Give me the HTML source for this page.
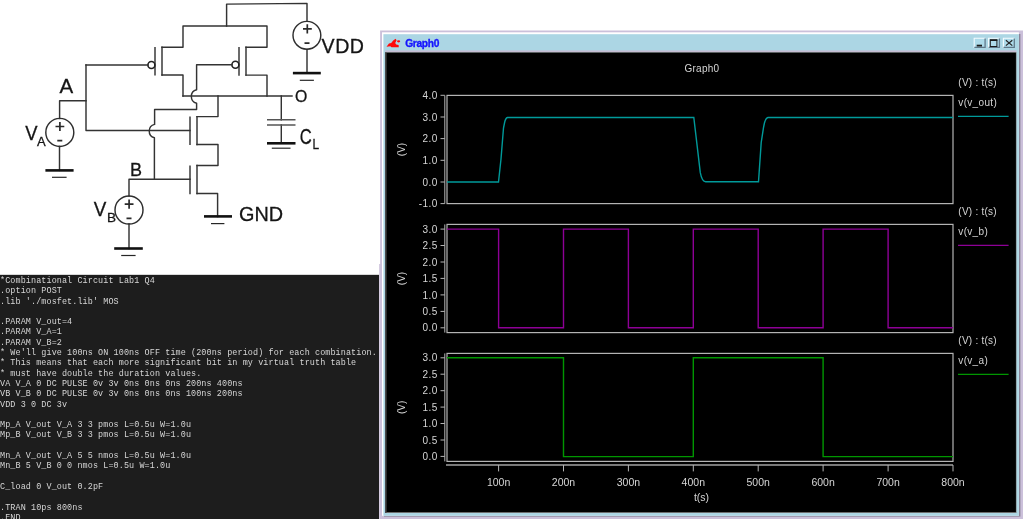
<!DOCTYPE html>
<html><head><meta charset="utf-8">
<style>
html,body{margin:0;padding:0;background:#fff;width:1023px;height:519px;overflow:hidden;position:relative}
svg{position:absolute;left:0;top:0}
#term{position:absolute;left:0;top:275px;width:379px;height:244px;background:#1d1d1d;overflow:hidden;box-shadow:0 -1px 0 #d8d8d8;}
#term pre{margin:0;padding:0;position:absolute;left:0px;top:1px;font-family:"Liberation Mono",monospace;font-size:8.45px;letter-spacing:0.1px;line-height:10.3px;color:#d6d6d6;white-space:pre}
</style></head><body>
<svg id="circ" width="380" height="275" viewBox="0 0 380 275" style="will-change:transform">
<g fill="none" stroke="#333" stroke-width="1.45" stroke-linecap="square" stroke-linejoin="round">
<!-- VDD top -->
<path d="M226.6,26 V4.1 L307,3.4 V21"/>
<!-- PMOS rails -->
<path d="M162,47.2 H183 V26 H267 V47.3 H246"/>
<path d="M162,47.2 V75"/>
<path d="M155,47.6 V74.8"/>
<circle cx="151.4" cy="65" r="3.5" stroke="#222" stroke-width="1.6"/>
<path d="M162,75 H183 V96"/>
<path d="M246,47.3 V75.1"/>
<path d="M239,47.6 V75"/>
<circle cx="235.4" cy="64.7" r="3.5" stroke="#222" stroke-width="1.6"/>
<path d="M246,75.1 H267 V96"/>
<!-- output -->
<path d="M183,96 H292"/>
<!-- B gate wire with hops -->
<path d="M231.9,64.7 H196.6 V89.8 A6.9,6.9 0 0 0 196.6,103.2 V109.4 H154.6 V124.4 A6.9,6.9 0 0 0 154.4,137.8 V179.2"/>
<!-- A -->
<path d="M59.6,118.4 V100.7 H86"/>
<path d="M86,65 H147.9"/>
<path d="M86,65 V130.5 H190"/>
<!-- NMOS -->
<path d="M190,117.2 V144.2"/>
<path d="M197,116.6 V144.4"/>
<path d="M197,116.6 H218 V96"/>
<path d="M197,144.4 H218 V165.4 H197"/>
<path d="M197,165.4 V193.4"/>
<path d="M190,166.2 V193.4"/>
<path d="M197,193.4 H217.6 V216.4"/>
<!-- B -->
<path d="M129,196 V179.2 H190"/>
<!-- source bottoms -->
<path d="M129,224 V248.5"/>
<path d="M59.5,146.4 V170.4"/>
<path d="M307,49.4 V73"/>
<!-- cap -->
<path d="M281.3,96 V119.8"/>
<path d="M281.3,125 V143.2"/>
</g>
<g fill="none" stroke="#2e2e2e" stroke-width="1.45">
<circle cx="306.9" cy="35.3" r="13.9"/>
<circle cx="59.8" cy="132.4" r="14"/>
<circle cx="129" cy="210" r="14"/>
</g>
<!-- plus minus -->
<g stroke="#2a2a2a" stroke-width="1.7" fill="none">
<path d="M303,28.8 H311.8 M307.3,24.3 V33.5 M304.5,43.2 H309.5"/>
<path d="M55.5,126.5 H64.3 M59.9,121.9 V131.1 M57.3,140.7 H62.3"/>
<path d="M124.7,204.1 H133.5 M129.1,199.5 V208.7 M126.5,218.3 H131.5"/>
</g>
<!-- grounds -->
<g stroke="#111" stroke-width="2.6">
<path d="M292.9,73.1 H320.8"/>
<path d="M45.4,170.4 H73.6"/>
<path d="M114.2,248.5 H142.8"/>
<path d="M204,216.4 H232"/>
<path d="M267,143.3 H295.5"/>
</g>
<g stroke="#262626" stroke-width="1.2">
<path d="M299.8,80.3 H313.9"/>
<path d="M52,177.3 H66.6"/>
<path d="M121.2,255.5 H135.6"/>
<path d="M211,223.6 H224.4"/>
<path d="M271.8,148.2 H290.5"/>
<path d="M267,119.8 H295.5 M267,125 H295.5" stroke="#555" stroke-width="1.6"/>
</g>
<g font-family="Liberation Sans" fill="#151515" stroke="#151515" stroke-width="0.3">
<text x="59.5" y="93" font-size="20.5">A</text>
<text x="25.2" y="140" font-size="20.5" transform="translate(25.2,0) scale(0.9,1) translate(-25.2,0)">V</text>
<text x="37" y="146" font-size="13">A</text>
<text x="130" y="176" font-size="18">B</text>
<text x="93.8" y="216.5" font-size="20.5" transform="translate(93.8,0) scale(0.92,1) translate(-93.8,0)">V</text>
<text x="107" y="222.3" font-size="13.6">B</text>
<text x="321.6" y="53.2" font-size="19.6" letter-spacing="0.5">VDD</text>
<text x="295" y="101.8" font-size="15.8">O</text>
<text x="299.8" y="143.9" font-size="21.6" transform="translate(300,0) scale(0.77,1) translate(-300,0)">C</text>
<text x="312.4" y="149.5" font-size="14" transform="translate(312.4,0) scale(0.85,1) translate(-312.4,0)">L</text>
<text x="239" y="220.6" font-size="20.8" transform="translate(239,0) scale(0.955,1) translate(-239,0)">GND</text>
</g>
</svg>
<div id="term"><pre>*Combinational Circuit Lab1 Q4
.option POST
.lib './mosfet.lib' MOS

.PARAM V_out=4
.PARAM V_A=1
.PARAM V_B=2
* We'll give 100ns ON 100ns OFF time (200ns period) for each combination.
* This means that each more significant bit in my virtual truth table
* must have double the duration values.
VA V_A 0 DC PULSE 0v 3v 0ns 0ns 0ns 200ns 400ns
VB V_B 0 DC PULSE 0v 3v 0ns 0ns 0ns 100ns 200ns
VDD 3 0 DC 3v

Mp_A V_out V_A 3 3 pmos L=0.5u W=1.0u
Mp_B V_out V_B 3 3 pmos L=0.5u W=1.0u

Mn_A V_out V_A 5 5 nmos L=0.5u W=1.0u
Mn_B 5 V_B 0 0 nmos L=0.5u W=1.0u

C_load 0 V_out 0.2pF

.TRAN 10ps 800ns
.END</pre></div>
<!--GRAPH-->
<svg id="graph" width="1023" height="519" viewBox="0 0 1023 519" style="position:absolute;left:0;top:0;will-change:transform">
<rect x="379.2" y="30.5" width="643.8" height="488.5" fill="#cbc0da"/>
<rect x="379" y="30" width="1.1" height="234" fill="#ffffff"/>
<rect x="384" y="34" width="636.4" height="482.6" fill="#8a8296"/>
<rect x="382" y="32.3" width="636.9" height="483.5" fill="#ffffff"/>
<rect x="383.4" y="34.2" width="635.5" height="481.6" fill="#acd6e4"/>
<rect x="385.2" y="50.4" width="631.3" height="1.8" fill="#c6bcd2"/>
<rect x="385.2" y="52.2" width="631.3" height="460.8" fill="#7a7a7a"/>
<rect x="385.2" y="52.2" width="1.3" height="460.8" fill="#3a3a3a"/>
<rect x="386.5" y="52.7" width="629.4" height="459.4" fill="#000"/>
<text x="405.2" y="46.8" font-family="Liberation Sans" font-weight="bold" font-size="10.2" letter-spacing="-0.3" fill="#1414ff" stroke="#1414ff" stroke-width="0.35">Graph0</text>
<path d="M386.5,46.8 L389,43.6 L391.2,43 L393.2,40.4 L395.6,38.8 L396.6,40.2 L395.2,43 L396.2,44.6 L398.6,45 L398.8,47.2 L391.5,47.3 L390.3,46.2 Z" fill="#ff0a0a"/>
<ellipse cx="398.6" cy="41.3" rx="1.6" ry="1.1" fill="#ff0a0a"/>
<rect x="973.7" y="37.8" width="12" height="10.2" fill="#aedbea"/>
<path d="M974.2,48 V38.3 H985.3000000000001" stroke="#f4fbff" stroke-width="1.1" fill="none"/>
<path d="M974.3000000000001,47.4 H985.1 V38.4" stroke="#61798a" stroke-width="1.3" fill="none"/>
<rect x="988.0" y="37.8" width="12" height="10.2" fill="#aedbea"/>
<path d="M988.5,48 V38.3 H999.6" stroke="#f4fbff" stroke-width="1.1" fill="none"/>
<path d="M988.6,47.4 H999.4 V38.4" stroke="#61798a" stroke-width="1.3" fill="none"/>
<rect x="1002.9" y="37.8" width="12" height="10.2" fill="#aedbea"/>
<path d="M1003.4,48 V38.3 H1014.5" stroke="#f4fbff" stroke-width="1.1" fill="none"/>
<path d="M1003.5,47.4 H1014.3 V38.4" stroke="#61798a" stroke-width="1.3" fill="none"/>
<rect x="976.7" y="44.7" width="5.3" height="1.8" fill="#1a1a1a"/>
<rect x="990.3" y="39.9" width="6.6" height="6.6" fill="none" stroke="#1a1a1a" stroke-width="1"/><rect x="990" y="39.4" width="7.3" height="1.6" fill="#1a1a1a"/>
<path d="M1005.9,40.2 L1012.3,45.6 M1012.3,40.2 L1005.9,45.6" stroke="#222" stroke-width="1.2"/>
<text x="701.9" y="71.8" text-anchor="middle" font-family="Liberation Sans" font-size="10" letter-spacing="0.25" fill="#d6d6d6">Graph0</text>
<rect x="447" y="95.4" width="506" height="108.19999999999999" fill="none" stroke="#b4b4b4" stroke-width="1.2"/>
<path d="M444.8,95.4 V203.6" stroke="#b4b4b4" stroke-width="1"/>
<path d="M440.5,95.3 H444.8" stroke="#b4b4b4" stroke-width="1"/>
<text x="437.9" y="98.9" text-anchor="end" font-family="Liberation Sans" font-size="10" letter-spacing="0.5" fill="#d6d6d6">4.0</text>
<path d="M440.5,117.0 H444.8" stroke="#b4b4b4" stroke-width="1"/>
<text x="437.9" y="120.6" text-anchor="end" font-family="Liberation Sans" font-size="10" letter-spacing="0.5" fill="#d6d6d6">3.0</text>
<path d="M440.5,138.6 H444.8" stroke="#b4b4b4" stroke-width="1"/>
<text x="437.9" y="142.2" text-anchor="end" font-family="Liberation Sans" font-size="10" letter-spacing="0.5" fill="#d6d6d6">2.0</text>
<path d="M440.5,160.3 H444.8" stroke="#b4b4b4" stroke-width="1"/>
<text x="437.9" y="163.9" text-anchor="end" font-family="Liberation Sans" font-size="10" letter-spacing="0.5" fill="#d6d6d6">1.0</text>
<path d="M440.5,182.0 H444.8" stroke="#b4b4b4" stroke-width="1"/>
<text x="437.9" y="185.6" text-anchor="end" font-family="Liberation Sans" font-size="10" letter-spacing="0.5" fill="#d6d6d6">0.0</text>
<path d="M440.5,203.6 H444.8" stroke="#b4b4b4" stroke-width="1"/>
<text x="437.9" y="207.2" text-anchor="end" font-family="Liberation Sans" font-size="10" letter-spacing="0.5" fill="#d6d6d6">-1.0</text>
<text x="0" y="0" transform="translate(405.2,149.5) rotate(-90)" text-anchor="middle" font-family="Liberation Sans" font-size="10" fill="#d6d6d6">(V)</text>
<text x="958.3" y="86.0" font-family="Liberation Sans" font-size="10" letter-spacing="0.25" fill="#d6d6d6">(V) : t(s)</text>
<text x="958.3" y="106.4" font-family="Liberation Sans" font-size="10" letter-spacing="0.33" fill="#d6d6d6">v(v_out)</text>
<path d="M958,116.4 H1008.6" stroke="#009a9a" stroke-width="1.4"/>
<rect x="447" y="224.4" width="506" height="108.20000000000002" fill="none" stroke="#b4b4b4" stroke-width="1.2"/>
<path d="M444.8,224.4 V332.6" stroke="#b4b4b4" stroke-width="1"/>
<path d="M440.5,229.1 H444.8" stroke="#b4b4b4" stroke-width="1"/>
<text x="437.9" y="232.7" text-anchor="end" font-family="Liberation Sans" font-size="10" letter-spacing="0.5" fill="#d6d6d6">3.0</text>
<path d="M440.5,245.5 H444.8" stroke="#b4b4b4" stroke-width="1"/>
<text x="437.9" y="249.1" text-anchor="end" font-family="Liberation Sans" font-size="10" letter-spacing="0.5" fill="#d6d6d6">2.5</text>
<path d="M440.5,262.0 H444.8" stroke="#b4b4b4" stroke-width="1"/>
<text x="437.9" y="265.6" text-anchor="end" font-family="Liberation Sans" font-size="10" letter-spacing="0.5" fill="#d6d6d6">2.0</text>
<path d="M440.5,278.4 H444.8" stroke="#b4b4b4" stroke-width="1"/>
<text x="437.9" y="282.1" text-anchor="end" font-family="Liberation Sans" font-size="10" letter-spacing="0.5" fill="#d6d6d6">1.5</text>
<path d="M440.5,294.9 H444.8" stroke="#b4b4b4" stroke-width="1"/>
<text x="437.9" y="298.5" text-anchor="end" font-family="Liberation Sans" font-size="10" letter-spacing="0.5" fill="#d6d6d6">1.0</text>
<path d="M440.5,311.4 H444.8" stroke="#b4b4b4" stroke-width="1"/>
<text x="437.9" y="315.0" text-anchor="end" font-family="Liberation Sans" font-size="10" letter-spacing="0.5" fill="#d6d6d6">0.5</text>
<path d="M440.5,327.8 H444.8" stroke="#b4b4b4" stroke-width="1"/>
<text x="437.9" y="331.4" text-anchor="end" font-family="Liberation Sans" font-size="10" letter-spacing="0.5" fill="#d6d6d6">0.0</text>
<text x="0" y="0" transform="translate(405.2,278.5) rotate(-90)" text-anchor="middle" font-family="Liberation Sans" font-size="10" fill="#d6d6d6">(V)</text>
<text x="958.3" y="215.0" font-family="Liberation Sans" font-size="10" letter-spacing="0.25" fill="#d6d6d6">(V) : t(s)</text>
<text x="958.3" y="235.4" font-family="Liberation Sans" font-size="10" letter-spacing="0.33" fill="#d6d6d6">v(v_b)</text>
<path d="M958,245.4 H1008.6" stroke="#8e0096" stroke-width="1.4"/>
<rect x="447" y="353.4" width="506" height="108.0" fill="none" stroke="#b4b4b4" stroke-width="1.2"/>
<path d="M444.8,353.4 V461.4" stroke="#b4b4b4" stroke-width="1"/>
<path d="M440.5,357.8 H444.8" stroke="#b4b4b4" stroke-width="1"/>
<text x="437.9" y="361.4" text-anchor="end" font-family="Liberation Sans" font-size="10" letter-spacing="0.5" fill="#d6d6d6">3.0</text>
<path d="M440.5,374.2 H444.8" stroke="#b4b4b4" stroke-width="1"/>
<text x="437.9" y="377.8" text-anchor="end" font-family="Liberation Sans" font-size="10" letter-spacing="0.5" fill="#d6d6d6">2.5</text>
<path d="M440.5,390.7 H444.8" stroke="#b4b4b4" stroke-width="1"/>
<text x="437.9" y="394.3" text-anchor="end" font-family="Liberation Sans" font-size="10" letter-spacing="0.5" fill="#d6d6d6">2.0</text>
<path d="M440.5,407.1 H444.8" stroke="#b4b4b4" stroke-width="1"/>
<text x="437.9" y="410.7" text-anchor="end" font-family="Liberation Sans" font-size="10" letter-spacing="0.5" fill="#d6d6d6">1.5</text>
<path d="M440.5,423.5 H444.8" stroke="#b4b4b4" stroke-width="1"/>
<text x="437.9" y="427.1" text-anchor="end" font-family="Liberation Sans" font-size="10" letter-spacing="0.5" fill="#d6d6d6">1.0</text>
<path d="M440.5,440.0 H444.8" stroke="#b4b4b4" stroke-width="1"/>
<text x="437.9" y="443.6" text-anchor="end" font-family="Liberation Sans" font-size="10" letter-spacing="0.5" fill="#d6d6d6">0.5</text>
<path d="M440.5,456.4 H444.8" stroke="#b4b4b4" stroke-width="1"/>
<text x="437.9" y="460.0" text-anchor="end" font-family="Liberation Sans" font-size="10" letter-spacing="0.5" fill="#d6d6d6">0.0</text>
<text x="0" y="0" transform="translate(405.2,407.4) rotate(-90)" text-anchor="middle" font-family="Liberation Sans" font-size="10" fill="#d6d6d6">(V)</text>
<text x="958.3" y="344.0" font-family="Liberation Sans" font-size="10" letter-spacing="0.25" fill="#d6d6d6">(V) : t(s)</text>
<text x="958.3" y="364.4" font-family="Liberation Sans" font-size="10" letter-spacing="0.33" fill="#d6d6d6">v(v_a)</text>
<path d="M958,374.4 H1008.6" stroke="#009600" stroke-width="1.4"/>
<path d="M447,182 H498.5 L501,159 L503.5,128 L504.5,123 Q505.5,118 507.5,117.5 H693.8 L700.3,172.7 Q702,181.7 705.6,181.7 H758.5 L761.2,142.6 L763.5,127.6 Q765,118 768,117.5 H953" fill="none" stroke="#009a9a" stroke-width="1.4"/>
<path d="M447,229.1 H498.6 V327.8 H563.5 V229.1 H628.4 V327.8 H693.3 V229.1 H758.2 V327.8 H823.1 V229.1 H888.1 V327.8 H953" fill="none" stroke="#8e0096" stroke-width="1.4"/>
<path d="M447,357.8 H563.5 V456.6 H693.3 V357.8 H823.1 V456.6 H953" fill="none" stroke="#009600" stroke-width="1.4"/>
<path d="M446,464.9 H953" stroke="#a0a0a0" stroke-width="1.5"/>
<path d="M498.6,465 V471.4" stroke="#b4b4b4" stroke-width="1"/>
<text x="498.6" y="486" text-anchor="middle" font-family="Liberation Sans" font-size="10.5" fill="#d6d6d6">100n</text>
<path d="M563.5,465 V471.4" stroke="#b4b4b4" stroke-width="1"/>
<text x="563.5" y="486" text-anchor="middle" font-family="Liberation Sans" font-size="10.5" fill="#d6d6d6">200n</text>
<path d="M628.4,465 V471.4" stroke="#b4b4b4" stroke-width="1"/>
<text x="628.4" y="486" text-anchor="middle" font-family="Liberation Sans" font-size="10.5" fill="#d6d6d6">300n</text>
<path d="M693.3,465 V471.4" stroke="#b4b4b4" stroke-width="1"/>
<text x="693.3" y="486" text-anchor="middle" font-family="Liberation Sans" font-size="10.5" fill="#d6d6d6">400n</text>
<path d="M758.2,465 V471.4" stroke="#b4b4b4" stroke-width="1"/>
<text x="758.2" y="486" text-anchor="middle" font-family="Liberation Sans" font-size="10.5" fill="#d6d6d6">500n</text>
<path d="M823.1,465 V471.4" stroke="#b4b4b4" stroke-width="1"/>
<text x="823.1" y="486" text-anchor="middle" font-family="Liberation Sans" font-size="10.5" fill="#d6d6d6">600n</text>
<path d="M888.1,465 V471.4" stroke="#b4b4b4" stroke-width="1"/>
<text x="888.1" y="486" text-anchor="middle" font-family="Liberation Sans" font-size="10.5" fill="#d6d6d6">700n</text>
<path d="M953.0,465 V471.4" stroke="#b4b4b4" stroke-width="1"/>
<text x="953.0" y="486" text-anchor="middle" font-family="Liberation Sans" font-size="10.5" fill="#d6d6d6">800n</text>
<text x="701.5" y="501" text-anchor="middle" font-family="Liberation Sans" font-size="10.5" fill="#d6d6d6">t(s)</text>
</svg>
<!--/GRAPH-->
</body></html>
